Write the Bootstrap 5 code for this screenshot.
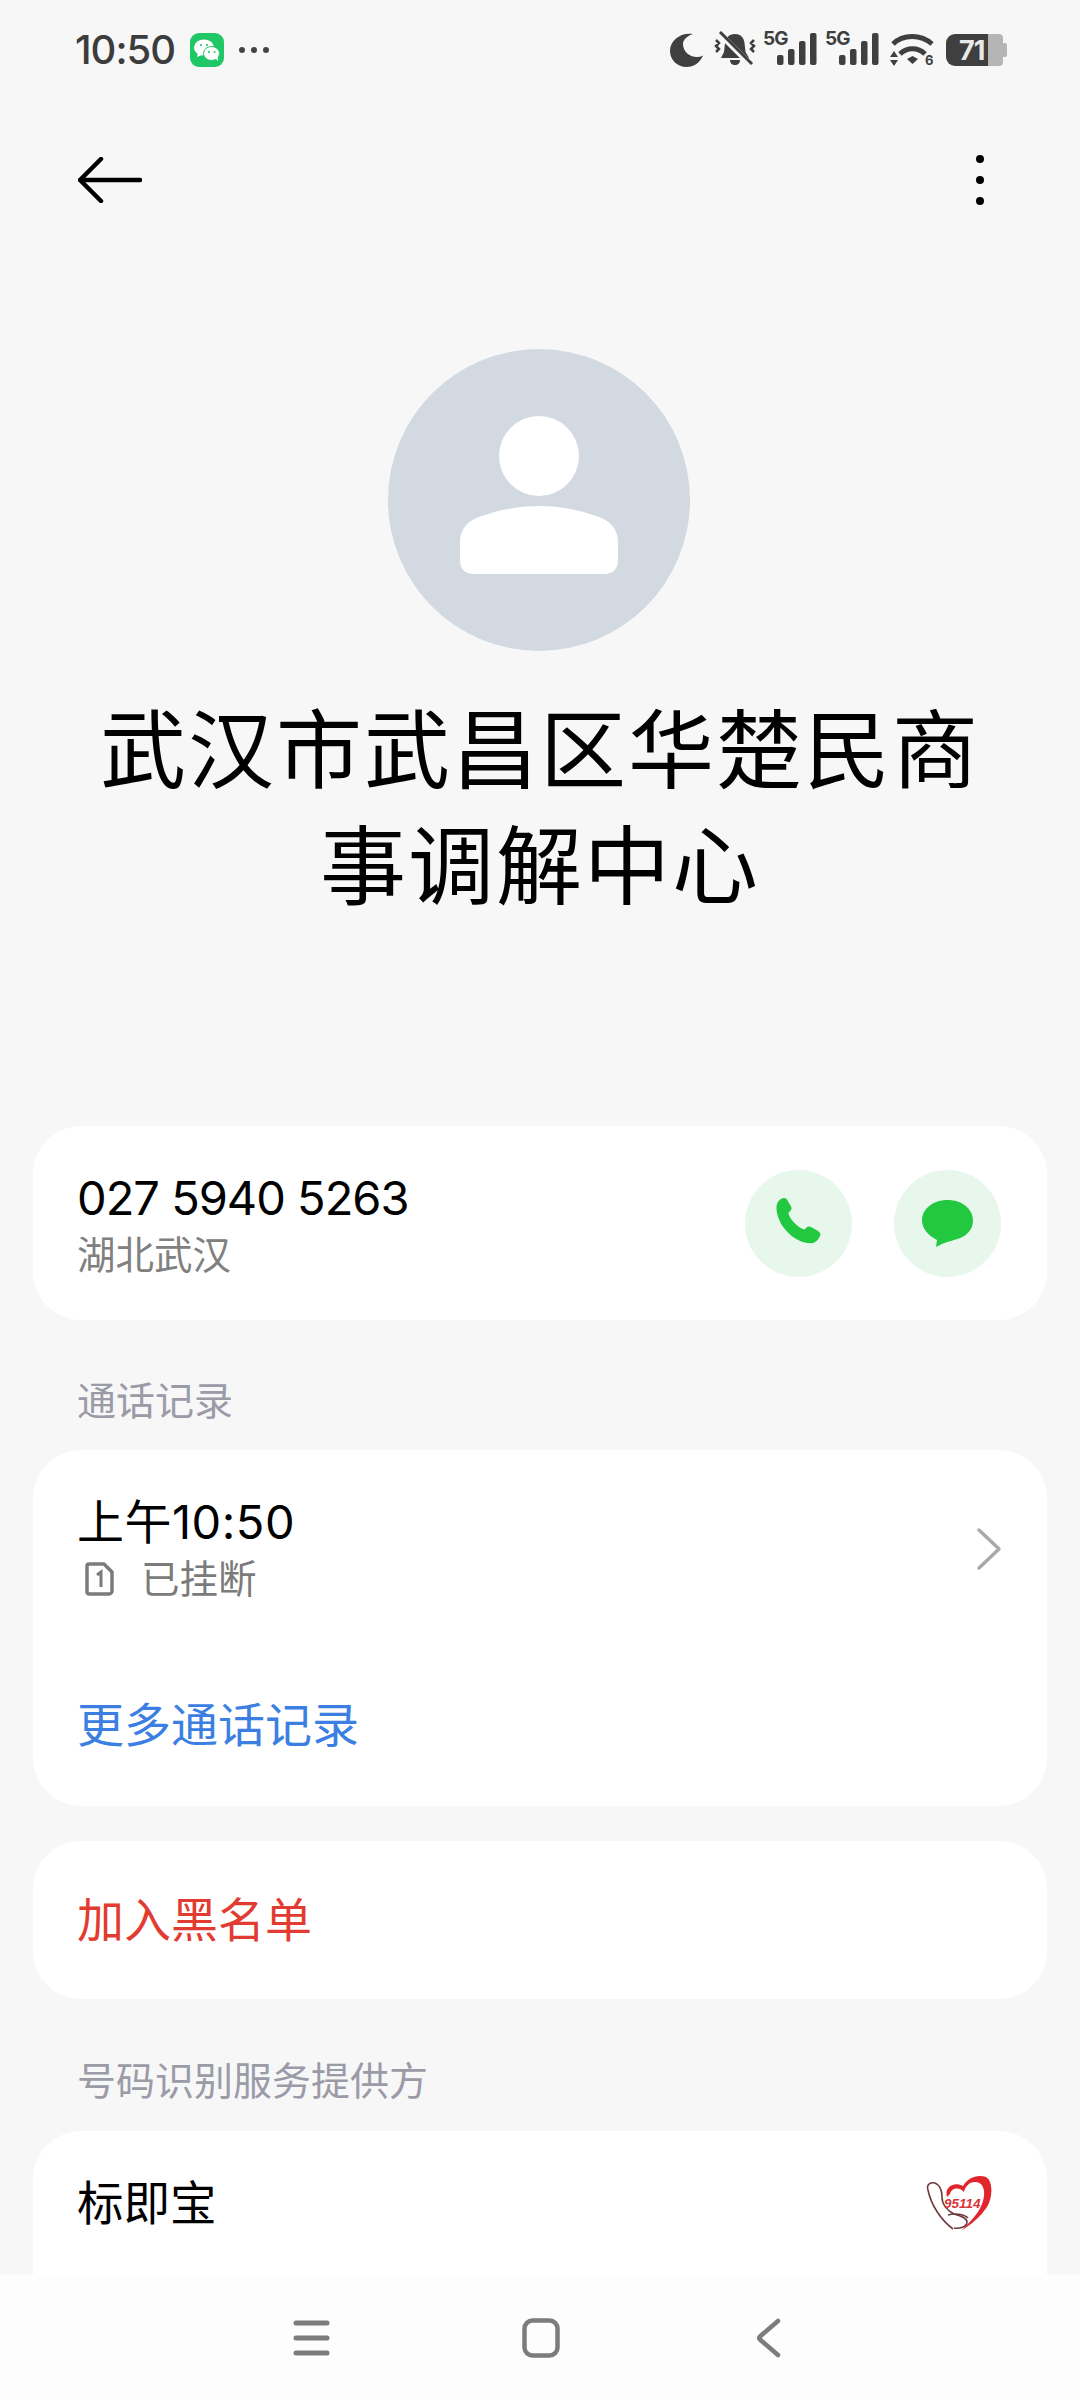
<!DOCTYPE html>
<html lang="zh-CN">
<head>
<meta charset="utf-8">
<title>联系人详情</title>
<link rel="stylesheet" href="https://cdn.jsdelivr.net/npm/bootstrap@5.3.0/dist/css/bootstrap.min.css">
<style>
html,body{height:2400px;}
body{width:1080px;background:#f7f7f7;font-family:"Inter","Noto Sans CJK SC",sans-serif;color:#000;overflow:hidden;}
.phone-shell{height:2400px;}
.scroll-area{min-height:0;overflow:hidden;}
.status-row{height:100px;padding:0 73px 0 75px;}
.clock{font-size:40px;font-weight:500;color:#3c3c3c;line-height:1;letter-spacing:-1px;}
.wx-tile{margin-left:15px;}
.more-dots{margin-left:14px;}
.gap-bell{margin-left:10px;}
.gap-sig-a{margin-left:6px;}
.gap-sig-b{margin-left:8px;}
.gap-wifi{margin-left:9px;}
.gap-batt{margin-left:11px;}
.tool-row{height:160px;padding:0 78px;}
.kebab{margin-right:18px;}
.avatar-disc{width:302px;height:302px;background:#d2d9e1;margin-top:89px;margin-left:388px;padding-bottom:11px;}
.contact-title{font-size:86px;line-height:116px;letter-spacing:2px;font-weight:400;text-align:center;margin:42px 60px 0;height:232px;}
.sheet{background:#fff;border:0;border-radius:48px;margin:0 33px;padding:0 45px;}
.sheet-num{height:194px;margin-top:201px;padding-left:44px;padding-right:46px;}
.num-block{padding-top:3px;}
.num-main{font-size:47px;line-height:60px;letter-spacing:-1px;}
.num-sub{font-size:38.500px;line-height:54px;color:#808080;}
.round-act{width:107px;height:107px;background:#e8f7ec;}
.act-gap{gap:42px;}
.sec-label{font-size:39px;line-height:54px;color:#9b9ba8;margin:0 77px;}
.label-a{margin-top:54px;margin-bottom:22px;}
.label-b{margin-top:55px;margin-bottom:23px;}
.sheet-log{height:356px;padding-left:44px;}
.log-time{font-size:47px;line-height:60px;letter-spacing:.5px;}
.log-state{font-size:38.500px;line-height:54px;color:#7b7b7b;gap:26px;}
.log-first{padding-top:42px;}
.link-more{font-size:47px;line-height:60px;color:#3b7fe2;margin-top:89px;}
.sheet-block{height:158px;margin-top:35px;padding-left:44px;font-size:47px;color:#e23b31;}
.sheet-provider{height:200px;font-size:46.500px;color:#000;padding-left:44px;padding-bottom:54px;}
.logo-mark{margin-right:10px;}
.bottom-nav{height:125px;background:#fdfdfd;padding:0 298px 0 293px;flex-shrink:0;}
</style>
</head>
<body>
<div class="phone-shell d-flex flex-column">
  <div class="scroll-area flex-grow-1">
    <div class="status-row d-flex align-items-center justify-content-between">
      <div class="d-flex align-items-center">
        <span class="clock">10:50</span>
        <svg class="wx-tile" width="34" height="34" viewBox="0 0 34 34"><rect width="34" height="34" rx="9" fill="#1fc766"/><ellipse cx="14" cy="14.500" rx="10" ry="8" fill="#fff"/><path d="M8 20l-1 4 5-2z" fill="#fff"/><ellipse cx="21.500" cy="20.500" rx="8" ry="7" fill="#fff" stroke="#1fc766" stroke-width="1"/><path d="M25 25l3 3-.5-5z" fill="#fff"/><circle cx="11" cy="12" r="1.100" fill="#1fc766"/><circle cx="17" cy="12" r="1.100" fill="#1fc766"/><circle cx="19" cy="19" r="1" fill="#1fc766"/><circle cx="24.500" cy="19" r="1" fill="#1fc766"/></svg>
        <svg class="more-dots" width="32" height="8" viewBox="0 0 32 8"><circle cx="4" cy="4" r="3" fill="#444"/><circle cx="16" cy="4" r="3" fill="#444"/><circle cx="28" cy="4" r="3" fill="#444"/></svg>
      </div>
      <div class="d-flex align-items-center">
        <svg width="33" height="36" viewBox="0 0 33 36"><path d="M23 2C11 0 0 8 0 19c0 9 7.500 16 16.500 16 7.500 0 13.500-4.500 16.500-11.500-2 1-4 1.500-6 1.500C19 25 13 19 13 12c0-4 4-8 10-10z" fill="#3f3f3f"/></svg>
        <svg class="gap-bell" width="44" height="38" viewBox="0 0 44 38"><path d="M22 3c6 0 9 4 9.500 9l1 9 3.500 6H8l3-6 1-9c.5-5 4-9 10-9z" fill="#3f3f3f"/><path d="M17 29h10c0 3-2 5-5 5s-5-2-5-5z" fill="#3f3f3f"/><path d="M6 2l32 32" stroke="#f7f7f7" stroke-width="6"/><path d="M7 1l32 32" stroke="#3f3f3f" stroke-width="3"/><path d="M3 9l3 3-3 3 3 3-3 3M41 9l-3 3 3 3-3 3 3 3" fill="none" stroke="#3f3f3f" stroke-width="2.500"/></svg>
        <svg class="gap-sig-a" width="54" height="48" viewBox="0 -4 54 48"><text x="0" y="15" font-family="Inter,sans-serif" font-size="19" font-weight="700" letter-spacing="-1" fill="#3f3f3f">5G</text><rect x="14" y="25" width="6.500" height="10" rx="2" fill="#3f3f3f"/><rect x="25" y="19" width="6.500" height="16" rx="2" fill="#3f3f3f"/><rect x="36" y="11" width="6.500" height="24" rx="2" fill="#3f3f3f"/><rect x="47" y="3" width="6.500" height="32" rx="2" fill="#3f3f3f"/></svg>
        <svg class="gap-sig-b" width="54" height="48" viewBox="0 -4 54 48"><text x="0" y="15" font-family="Inter,sans-serif" font-size="19" font-weight="700" letter-spacing="-1" fill="#3f3f3f">5G</text><rect x="14" y="25" width="6.500" height="10" rx="2" fill="#3f3f3f"/><rect x="25" y="19" width="6.500" height="16" rx="2" fill="#3f3f3f"/><rect x="36" y="11" width="6.500" height="24" rx="2" fill="#3f3f3f"/><rect x="47" y="3" width="6.500" height="32" rx="2" fill="#3f3f3f"/></svg>
        <svg class="gap-wifi" width="46" height="38" viewBox="0 0 46 38"><path d="M5 13C15 3 33 3 44 13" fill="none" stroke="#3f3f3f" stroke-width="5"/><path d="M12 23c7-7 18-7 25 0" fill="none" stroke="#3f3f3f" stroke-width="5"/><path d="M19 28l5.500-3 5.500 3-5.500 5z" fill="#3f3f3f"/><path d="M6 20l4 6H2zM6 35l4-6H2z" fill="#3f3f3f"/><text x="37" y="34" font-family="Inter,sans-serif" font-size="13" font-weight="700" fill="#3f3f3f">6</text></svg>
        <svg class="gap-batt" width="62" height="34" viewBox="0 0 62 34"><path d="M43 1h11a4 4 0 0 1 4 4v24a4 4 0 0 1-4 4H43z" fill="#b5b5b5"/><rect x="57" y="10" width="5" height="14" rx="2" fill="#b5b5b5"/><path d="M43 1H10A9 9 0 0 0 1 10v14a9 9 0 0 0 9 9h33z" fill="#3f3f3f"/><text x="14" y="27" font-family="Inter,sans-serif" font-size="27" font-weight="700" letter-spacing="-1" fill="#e9e9e9">71</text></svg>
      </div>
    </div>

    <div class="tool-row d-flex align-items-center justify-content-between">
      <svg width="64" height="46" viewBox="0 0 64 46"><path d="M62 23H2M23 2L2 23l21 21" fill="none" stroke="#000" stroke-width="4.500" stroke-linecap="round" stroke-linejoin="round"/></svg>
      <svg class="kebab" width="8" height="52" viewBox="0 0 8 52"><circle cx="4" cy="5" r="4" fill="#000"/><circle cx="4" cy="26" r="4" fill="#000"/><circle cx="4" cy="47" r="4" fill="#000"/></svg>
    </div>

    <div class="avatar-disc rounded-circle d-flex align-items-center justify-content-center">
      <svg width="158" height="158" viewBox="0 0 158 158"><circle cx="79" cy="40" r="40" fill="#fff"/><path d="M0 126c0-13 8-22 22-26 17-6 36-10 57-10s40 4 57 10c14 4 22 13 22 26v18c0 9-5 14-14 14H14c-9 0-14-5-14-14z" fill="#fff"/></svg>
    </div>

    <h1 class="contact-title">武汉市武昌区华楚民商事调解中心</h1>

    <div class="card sheet sheet-num flex-row align-items-center justify-content-between">
      <div class="num-block">
        <div class="num-main">027 5940 5263</div>
        <div class="num-sub">湖北武汉</div>
      </div>
      <div class="d-flex act-gap">
        <div class="round-act rounded-circle d-flex align-items-center justify-content-center">
          <svg width="46" height="50" viewBox="0 0 46 50"><path d="M6 .5c2-1 4-.5 5 1l4 7c1 2 .5 3-.5 4l-2 2.500c0 2 3 7 6 10s7 6 10 6.500l2-2c1-1 3-1.500 4.500-.5l7 4c2 1.500 3 3 2 5-1 2-3 6-7 7-12 2-24-8-29-15C3 24-1 12 1 6 2 3 4 1.500 6 .5z" fill="#22c840"/></svg>
        </div>
        <div class="round-act rounded-circle d-flex align-items-center justify-content-center">
          <svg width="51" height="47" viewBox="0 0 51 47"><path d="M25.500 0C39.500 0 51 8.500 51 20.500c0 9-6 15-14 18-6 2-15 4-23 8.500l1-7C7 36 0 29 0 20.500 0 8.500 11.500 0 25.500 0z" fill="#22c840"/></svg>
        </div>
      </div>
    </div>

    <div class="sec-label label-a">通话记录</div>
    <div class="card sheet sheet-log">
      <div class="d-flex align-items-center justify-content-between log-first">
        <div>
          <div class="log-time">上午10:50</div>
          <div class="log-state d-flex align-items-center">
            <svg class="ms-2" width="30" height="34" viewBox="0 0 30 34"><path d="M4 2h15l8 8v19a3 3 0 0 1-3 3H4a2 2 0 0 1-2-2V4a2 2 0 0 1 2-2z" fill="none" stroke="#7b7b7b" stroke-width="3.500" stroke-linejoin="round"/><path d="M12 13l4-3v15" fill="none" stroke="#7b7b7b" stroke-width="3"/></svg>
            <span>已挂断</span>
          </div>
        </div>
        <svg width="28" height="44" viewBox="0 0 28 44"><path d="M5 3l20 19L5 41" fill="none" stroke="#a9a9a9" stroke-width="3.500" stroke-linecap="round" stroke-linejoin="round"/></svg>
      </div>
      <div class="link-more">更多通话记录</div>
    </div>

    <div class="card sheet sheet-block justify-content-center">加入黑名单</div>

    <div class="sec-label label-b">号码识别服务提供方</div>
    <div class="card sheet sheet-provider flex-row align-items-center justify-content-between">
      <span>标即宝</span>
      <svg class="logo-mark" width="66" height="58" viewBox="0 0 66 58"><path d="M21 22C18 12 28 6 37 11 42 2 52-1 60 2c7 4 7 20 1 30-6 9-16 18-25 23 9-9 18-18 21-29 3-11 0-19-8-19-6 0-10 5-11 10-5-6-13-4-14 2z" fill="#e1262b"/><path d="M2 15C0 9 5 7 9 8c5 2 7 8 7 14 0 8 6 14 12 17 7 2 13 4 13 8 0 5-8 7-13 6" fill="none" stroke="#6e3a3c" stroke-width="1.600"/><path d="M2 15c3 15 13 30 25 39M22 40c6-2 16-1 20 3" fill="none" stroke="#6e3a3c" stroke-width="1.600"/><text x="18" y="33" font-family="Liberation Sans,sans-serif" font-style="italic" font-weight="700" font-size="13.500" fill="#d8353a">95114</text></svg>
    </div>
  </div>

  <nav class="bottom-nav d-flex align-items-center justify-content-between">
    <svg width="37" height="36" viewBox="0 0 37 36"><path d="M3 3h31M3 18h31M3 33h31" stroke="#7c7c7c" stroke-width="5" stroke-linecap="round"/></svg>
    <svg width="38" height="40" viewBox="0 0 38 40"><rect x="2.500" y="2.500" width="33" height="35" rx="8" fill="none" stroke="#7c7c7c" stroke-width="4.500"/></svg>
    <svg width="30" height="40" viewBox="0 0 30 40"><path d="M26 3L8 18.500c-1 1-1 2 0 3L26 37" fill="none" stroke="#7c7c7c" stroke-width="4.500" stroke-linecap="round"/></svg>
  </nav>
</div>
<script src="https://cdn.jsdelivr.net/npm/bootstrap@5.3.0/dist/js/bootstrap.bundle.min.js"></script>
</body>
</html>
